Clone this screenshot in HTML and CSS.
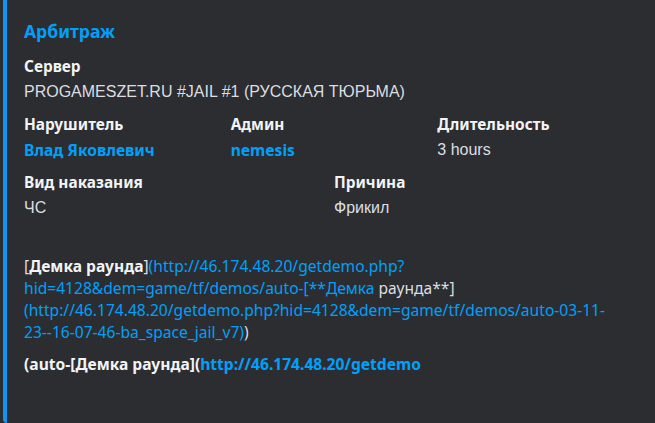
FILE: index.html
```html
<!DOCTYPE html>
<html lang="ru">
<head>
<meta charset="utf-8">
<link rel="stylesheet" href="styles.css">
</head>
<body>
<div class="embed">
  <div class="title">Арбитраж</div>
  <div class="fields">
    <div class="field full">
      <div class="fname">Сервер</div>
      <div class="fvalue">PROGAMESZET.RU #JAIL #1 (РУССКАЯ ТЮРЬМА)</div>
    </div>
    <div class="row three">
      <div class="field">
        <div class="fname">Нарушитель</div>
        <div class="fvalue link bold">Влад Яковлевич</div>
      </div>
      <div class="field">
        <div class="fname">Админ</div>
        <div class="fvalue link bold">nemesis</div>
      </div>
      <div class="field">
        <div class="fname">Длительность</div>
        <div class="fvalue">3 hours</div>
      </div>
    </div>
    <div class="row two">
      <div class="field">
        <div class="fname">Вид наказания</div>
        <div class="fvalue">ЧС</div>
      </div>
      <div class="field">
        <div class="fname">Причина</div>
        <div class="fvalue">Фрикил</div>
      </div>
    </div>
  </div>
  <div class="desc">
    <p>[<b>Демка раунда</b>]<span class="link">(http://46.174.48.20/getdemo.php?<br>hid=4128&amp;dem=game/tf/demos/auto-[**Демка</span> раунда**]<br><span class="link">(http://46.174.48.20/getdemo.php?hid=4128&amp;dem=game/tf/demos/auto-03-11-<br>23--16-07-46-ba_space_jail_v7)</span>)</p>
    <p class="bold">(auto-[Демка раунда](<span class="link">http://46.174.48.20/getdemo</span></p>
  </div>
</div>
</body>
</html>
```
FILE: styles.css
```css
html, body {
  margin: 0;
  padding: 0;
  background: #2b2d31;
  height: 423px;
  overflow: hidden;
}
body {
  font-family: "Noto Sans", "Open Sans", sans-serif;
  color: #dbdee1;
  font-size: 15.6px;
}
.embed {
  margin: -4px 3px 0 3px;
  height: 427px;
  box-sizing: border-box;
  border-left: 4px solid #0f96f5;
  border-radius: 4px;
  background: #2b2d31;
  padding: 24px 16px 0 17px;
}
.title {
  font-size: 17.5px;
  font-weight: 700;
  line-height: 22px;
  color: #00a0fa;
}
.fields {
  margin-top: 15px;
  display: flex;
  flex-direction: column;
  gap: 12px;
}
.row {
  display: grid;
  column-gap: 8px;
}
.row.three { grid-template-columns: repeat(3, 1fr); }
.row.two { grid-template-columns: repeat(2, 1fr); }
.fname {
  font-weight: 700;
  font-size: 15.4px;
  color: #f2f3f5;
  line-height: 20px;
  margin-bottom: 4px;
}
.fvalue {
  font-family: "Liberation Sans", Arial, sans-serif;
  font-size: 16px;
  line-height: 22px;
}
.fvalue.bold {
  font-family: "Noto Sans", sans-serif;
  font-size: 15.6px;
}
.link { color: #00a0fa; }
.bold { font-weight: 700; }
.desc {
  margin-top: 36px;
  line-height: 22px;
}
.desc p { margin: 0 0 10px 0; }
.desc b { font-weight: 700; color: #f2f3f5; }
.desc p.bold { color: #f2f3f5; }
```
